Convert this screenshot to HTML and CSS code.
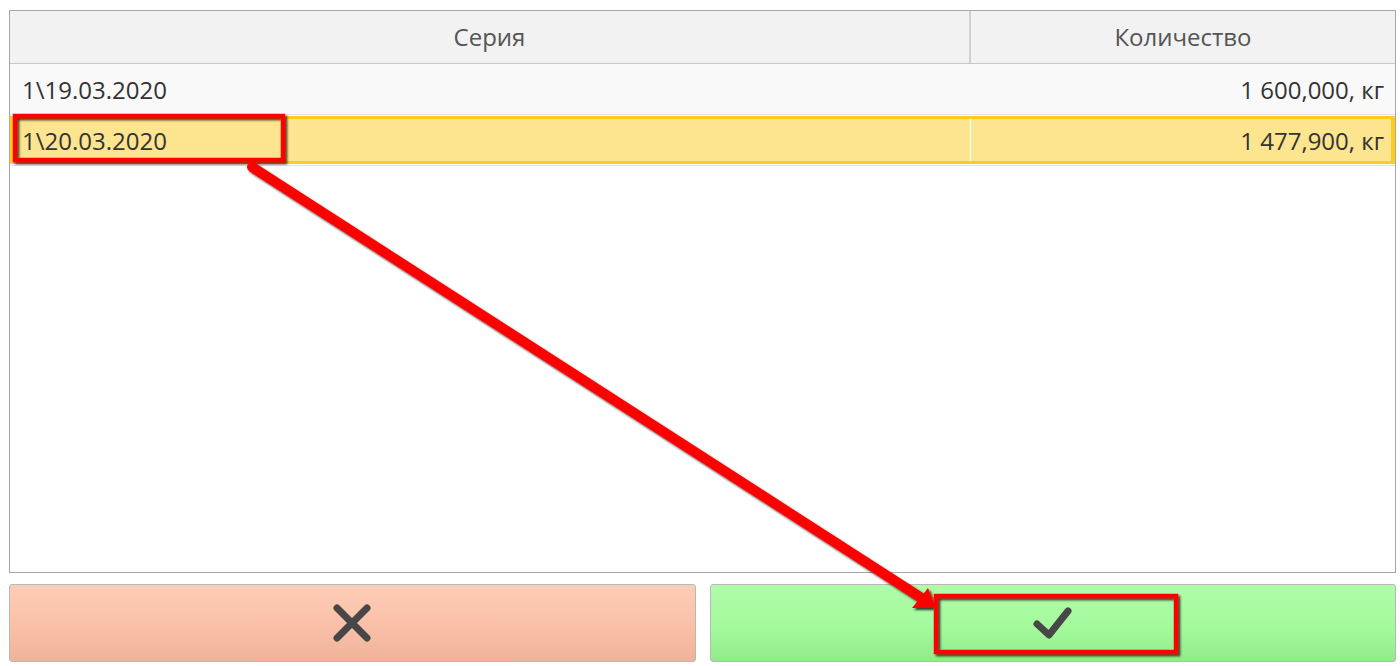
FILE: index.html
```html
<!DOCTYPE html>
<html lang="ru">
<head>
<meta charset="utf-8">
<title>Серия</title>
<link rel="stylesheet" href="styles.css">
</head>
<body>
<div class="page">
  <div class="grid">
    <div class="grid-head">
      <div class="hcell col-series">Серия</div>
      <div class="hcell col-qty">Количество</div>
    </div>
    <div class="grid-body">
      <div class="row">
        <div class="cell col-series">1\19.03.2020</div>
        <div class="cell col-qty num">1 600,000, кг</div>
      </div>
      <div class="row-wrap">
        <div class="row selected">
          <div class="cell col-series">1\20.03.2020</div>
          <div class="cell col-qty num">1 477,900, кг</div>
        </div>
      </div>
    </div>
  </div>
  <div class="actions">
    <button class="btn btn-cancel" aria-label="Отмена">
      <svg width="40" height="40" viewBox="0 0 40 40"><path d="M5 5 L35 35 M35 5 L5 35" stroke="#474747" stroke-width="7" stroke-linecap="round" fill="none"/></svg>
    </button>
    <button class="btn btn-ok" aria-label="OK">
      <svg width="40" height="32" viewBox="0 0 40 32"><path d="M4 17 L16 28 L35 4" stroke="#474747" stroke-width="7" stroke-linecap="round" stroke-linejoin="round" fill="none"/></svg>
    </button>
  </div>
  <svg class="overlay" width="1400" height="666" viewBox="0 0 1400 666">
    <defs>
      <filter id="sh" x="-10%" y="-10%" width="120%" height="120%">
        <feDropShadow dx="2" dy="2" stdDeviation="1.2" flood-color="#000" flood-opacity="0.75"/>
      </filter>
    </defs>
    <g filter="url(#sh)">
      <rect x="15" y="116" width="268" height="44" fill="none" stroke="#ff0000" stroke-width="4.5"/>
      <line x1="252" y1="167" x2="920" y2="597" stroke="#ff0000" stroke-width="10" stroke-linecap="round"/>
      <polygon points="936,608 912,608 928,588" fill="#ff0000"/>
      <rect x="936" y="596" width="240" height="56" fill="none" stroke="#ff0000" stroke-width="4.5"/>
    </g>
  </svg>
</div>
</body>
</html>
```

FILE: styles.css
```css
* { box-sizing: border-box; }
html, body { margin: 0; padding: 0; background: #fff; }
body {
  font-family: "Open Sans", "Noto Sans", sans-serif;
  color: #333;
}
.page {
  position: relative;
  width: 1400px;
  height: 666px;
  padding: 10px 4px 0 9px;
}
.grid {
  height: 563px;
  border: 1px solid #a6a6a6;
  background: #fff;
  display: flex;
  flex-direction: column;
}
.grid-head {
  display: flex;
  height: 53px;
  background: #f2f2f2;
  border-bottom: 1px solid #c8c8c8;
}
.hcell {
  display: flex;
  align-items: center;
  justify-content: center;
  font-size: 24px;
  color: #555;
  padding-bottom: 2px;
}
.col-series { width: 961px; flex: none; }
.col-qty { flex: 1; }
.hcell.col-series { border-right: 2px solid #d0d0d0; }
.grid-body { display: flex; flex-direction: column; }
.row {
  display: flex;
  height: 51px;
  background: #f9f9f9;
  border-bottom: 1px solid #e4e4e4;
}
.row-wrap {
  padding-top: 1px;
  border-bottom: 1px solid #e4e4e4;
  padding-bottom: 1px;
}
.row.selected {
  height: 48px;
  background: #fde48e;
  border: 3px solid #fdcb22;
  border-right-width: 4px;
}
.cell {
  display: flex;
  align-items: center;
  font-size: 24px;
  padding: 0 12px;
  color: #333;
}
.row .col-series { padding-left: 12px; }
.row.selected .col-series {
  width: 958px;
  padding-left: 9px;
  border-right: 1px solid #fff;
}
.num { justify-content: flex-end; padding-right: 11px; }
.row.selected .num { padding-right: 7px; }
.actions {
  display: flex;
  gap: 14px;
  margin-top: 11px;
  height: 78px;
}
.btn {
  flex: 1;
  border: 1px solid #b8b8b8;
  border-radius: 3px;
  display: flex;
  align-items: center;
  justify-content: center;
  padding: 0;
  cursor: pointer;
}
.btn-cancel {
  background: linear-gradient(#fecdb7, #f9bea6 60%, #efb39b);
}
.btn-ok {
  background: linear-gradient(#b0fcaa, #a2f99a 60%, #93ea8a);
}
.overlay {
  position: absolute;
  left: 0;
  top: 0;
  pointer-events: none;
}
```
